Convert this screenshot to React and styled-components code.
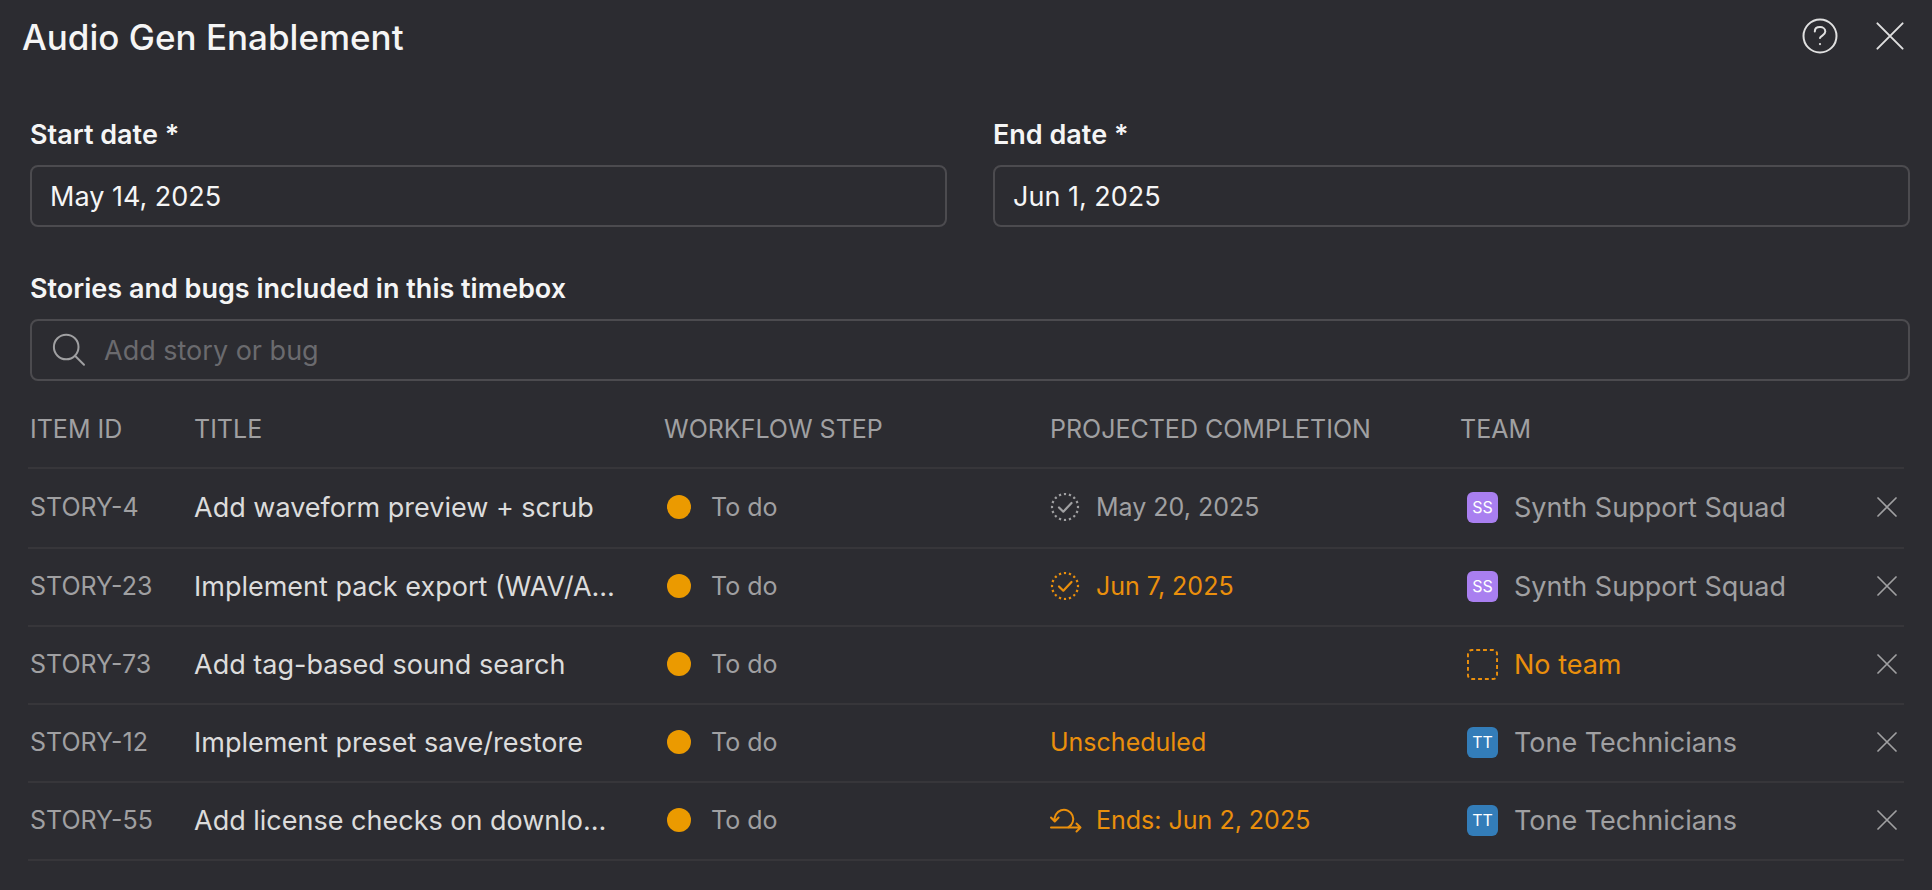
import styled, { createGlobalStyle } from "styled-components";

const items = [
  {
    id: "STORY-4",
    title: "Add waveform preview + scrub",
    step: "To do",
    completion: { icon: "check", text: "May 20, 2025" },
    team: { initials: "SS", name: "Synth Support Squad", color: "#a97ff0" }
  },
  {
    id: "STORY-23",
    title: "Implement pack export (WAV/A…",
    step: "To do",
    completion: { icon: "check", text: "Jun 7, 2025", warning: true },
    team: { initials: "SS", name: "Synth Support Squad", color: "#a97ff0" }
  },
  {
    id: "STORY-73",
    title: "Add tag-based sound search",
    step: "To do"
  },
  {
    id: "STORY-12",
    title: "Implement preset save/restore",
    step: "To do",
    completion: { text: "Unscheduled", warning: true },
    team: { initials: "TT", name: "Tone Technicians", color: "#337db9" }
  },
  {
    id: "STORY-55",
    title: "Add license checks on downlo…",
    step: "To do",
    completion: { icon: "sprint", text: "Ends: Jun 2, 2025", warning: true },
    team: { initials: "TT", name: "Tone Technicians", color: "#337db9" }
  }
];

// Icons
const Cross = ({ size, stroke }) => (
  <svg width={size} height={size} viewBox="0 0 20 20" fill="none" stroke="currentColor" strokeWidth={stroke} strokeLinecap="round">
    <path d="M1 1l18 18M19 1L1 19" />
  </svg>
);

const Help = () => (
  <svg width="36" height="36" viewBox="0 0 36 36" fill="none" stroke="currentColor" strokeWidth="2" strokeLinecap="round">
    <circle cx="18" cy="18" r="16.5" />
    <path d="M12.800 13.500c0-2.900 2.400-4.400 5.200-4.400s5.300 1.700 5.300 4.400c0 3.700-4.600 4-5.300 6.500" />
    <path d="M18 26v.1" strokeWidth="2.2" />
  </svg>
);

const Search = () => (
  <svg width="34" height="34" viewBox="0 0 34 34" fill="none" stroke="currentColor" strokeWidth="2" strokeLinecap="round">
    <circle cx="14.200" cy="14" r="12.300" />
    <path d="M23 22.700l9 9" />
  </svg>
);

const DottedCheck = () => (
  <svg width="30" height="30" viewBox="0 0 30 30" fill="none" stroke="currentColor" strokeWidth="2.200">
    <circle cx="15" cy="15" r="13" pathLength="80" strokeDasharray="2.200 2.800" strokeDashoffset="1.100" />
    <path d="M9 15.500l4.300 4.200L21.500 11" strokeLinecap="round" strokeLinejoin="round" />
  </svg>
);

const Sprint = () => (
  <svg width="30" height="30" viewBox="0 0 30 30" fill="none" stroke="currentColor" strokeWidth="2" strokeLinecap="round" strokeLinejoin="round" overflow="visible">
    <path d="M1 22.500h29M26.500 18.500l4 4-4 4" />
    <path d="M18.500 22.200A9.300 9.300 0 1 0 4.800 16M1 12.500l3.800 4 3.800-4" />
  </svg>
);

const DashedBox = () => (
  <svg width="31" height="31" viewBox="0 0 32 32" fill="none" stroke="currentColor" strokeWidth="2">
    <rect x="1" y="1" width="30" height="30" rx="4" pathLength="112" strokeDasharray="4 3" strokeDashoffset="2.500" />
  </svg>
);

const App = () => {
  return (
    <Dialog>
      <GlobalStyle />
      <Header>
        <h1>Audio Gen Enablement</h1>
        <Actions>
          <IconButton type="button" aria-label="Help">
            <Help />
          </IconButton>
          <IconButton type="button" aria-label="Close">
            <Cross size={28} stroke={1.4} />
          </IconButton>
        </Actions>
      </Header>
      <Form>
        <Dates>
          <Field>
            <Label htmlFor="start">Start date *</Label>
            <Input id="start" type="text" defaultValue="May 14, 2025" />
          </Field>
          <Field>
            <Label htmlFor="end">End date *</Label>
            <Input id="end" type="text" defaultValue="Jun 1, 2025" />
          </Field>
        </Dates>
        <Field>
          <Label htmlFor="search">Stories and bugs included in this timebox</Label>
          <SearchBox>
            <Search />
            <SearchInput id="search" type="text" placeholder="Add story or bug" />
          </SearchBox>
        </Field>
      </Form>
      <Table>
        <colgroup>
          <IdCol />
          <TitleCol />
          <StepCol />
          <CompletionCol />
          <col />
          <RemoveCol />
        </colgroup>
        <thead>
          <tr>
            <th>ITEM ID</th>
            <th>TITLE</th>
            <th>WORKFLOW STEP</th>
            <th>PROJECTED COMPLETION</th>
            <th>TEAM</th>
            <th aria-label="Remove" />
          </tr>
        </thead>
        <tbody>
          {items.map(({ id, title, step, completion, team }) => (
            <tr key={id}>
              <td>{id}</td>
              <td>
                <Title>{title}</Title>
              </td>
              <td>
                <Status>
                  <Dot />
                  {step}
                </Status>
              </td>
              <td>
                {completion && (
                  <Completion $warning={completion.warning}>
                    {completion.icon === "check" && <DottedCheck />}
                    {completion.icon === "sprint" && <Sprint />}
                    {completion.text}
                  </Completion>
                )}
              </td>
              <td>
                <Team $warning={!team}>
                  {team ? <Badge $color={team.color}>{team.initials}</Badge> : <DashedBox />}
                  {team ? team.name : "No team"}
                </Team>
              </td>
              <td>
                <IconButton type="button" aria-label={`Remove ${id}`} $muted>
                  <Cross size={20} stroke={1.7} />
                </IconButton>
              </td>
            </tr>
          ))}
        </tbody>
      </Table>
    </Dialog>
  );
};

export default App;

const GlobalStyle = createGlobalStyle`
  * {
    box-sizing: border-box;
  }
  body {
    margin: 0;
    background-color: #2c2c31;
    color: #f5f5f5;
    font-family: Inter, "Liberation Sans", sans-serif;
    font-size: 27px;
  }
`;

const Dialog = styled.main`
  padding-bottom: 28px;
`;

const Header = styled.header`
  display: flex;
  align-items: center;
  justify-content: space-between;
  height: 72px;
  padding: 0 28px 0 22px;
  h1 {
    margin: 0;
    padding-top: 2px;
    font-size: 35px;
    font-weight: 500;
  }
`;

const Actions = styled.div`
  display: flex;
  align-items: center;
  gap: 38px;
`;

const IconButton = styled.button`
  display: flex;
  padding: 0;
  border: 0;
  background: none;
  color: ${({ $muted }) => ($muted ? "#a0a0a2" : "#e0e0e0")};
  cursor: pointer;
`;

const Form = styled.form`
  display: flex;
  flex-direction: column;
  gap: 44px;
  padding: 45px 22px 0 30px;
`;

const Dates = styled.div`
  display: grid;
  grid-template-columns: 1fr 1fr;
  gap: 46px;
`;

const Field = styled.div`
  display: flex;
  flex-direction: column;
  gap: 12px;
`;

const Label = styled.label`
  font-weight: 600;
  line-height: 36px;
`;

const Input = styled.input`
  width: 100%;
  height: 62px;
  padding: 0 18px;
  border: 2px solid #4c4b4f;
  border-radius: 8px;
  background: none;
  color: inherit;
  font: inherit;
`;

const SearchBox = styled.div`
  display: flex;
  align-items: center;
  gap: 18px;
  height: 62px;
  padding: 0 20px;
  border: 2px solid #4c4b4f;
  border-radius: 8px;
  color: #a0a0a2;
`;

const SearchInput = styled.input`
  flex: 1;
  padding: 0;
  border: 0;
  outline: 0;
  background: none;
  color: #f5f5f5;
  font: inherit;
  &::placeholder {
    color: #6a6a6e;
  }
`;

const Table = styled.table`
  width: calc(100% - 56px);
  margin: 0 28px;
  border-spacing: 0;
  table-layout: fixed;
  color: #a0a0a2;
  font-size: 25px;
  th,
  td {
    height: 78px;
    padding: 0 0 2px 2px;
    border-bottom: 2px solid #37363a;
    text-align: left;
    white-space: nowrap;
  }
  th {
    height: 88px;
    padding-top: 12px;
    font-weight: 400;
  }
  tbody tr:first-child td {
    height: 80px;
  }
`;

const IdCol = styled.col`
  width: 164px;
`;

const TitleCol = styled.col`
  width: 470px;
`;

const StepCol = styled.col`
  width: 386px;
`;

const CompletionCol = styled.col`
  width: 410px;
`;

const RemoveCol = styled.col`
  width: 29px;
`;

const Title = styled.div`
  margin-right: 32px;
  overflow: hidden;
  color: #dcdcdc;
  font-size: 27px;
  text-overflow: ellipsis;
`;

const Status = styled.div`
  display: flex;
  align-items: center;
  gap: 20px;
  padding-left: 3px;
`;

const Dot = styled.span`
  width: 24px;
  height: 24px;
  border-radius: 50%;
  background-color: #eb9a00;
`;

const Completion = styled.div`
  display: flex;
  align-items: center;
  gap: 16px;
  color: ${({ $warning }) => ($warning ? "#ea8f0c" : "inherit")};
`;

const Team = styled(Completion)`
  padding-left: 7px;
  font-size: 27px;
`;

const Badge = styled.span`
  display: flex;
  align-items: center;
  justify-content: center;
  width: 31px;
  height: 31px;
  border-radius: 6px;
  background-color: ${({ $color }) => $color};
  color: #ffffff;
  font-size: 16px;
`;
